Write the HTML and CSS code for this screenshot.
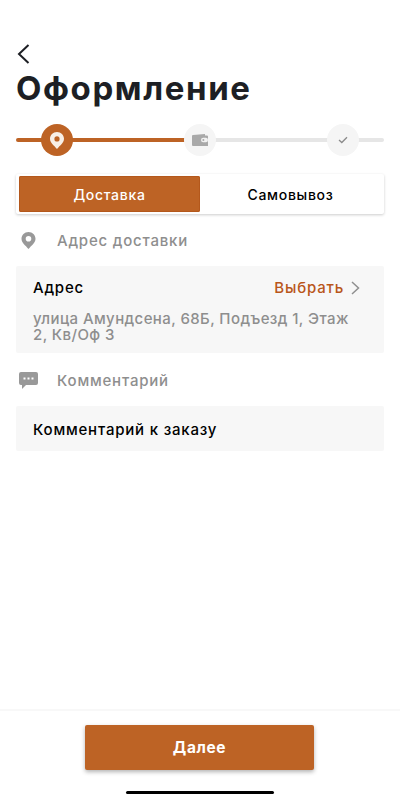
FILE: index.html
```html
<!DOCTYPE html>
<html lang="ru">
<head>
    <meta charset="UTF-8">
    <meta name="viewport" content="width=device-width, initial-scale=1.0">
    <title>Оформление</title>
    <link rel="stylesheet" href="styles.css">
</head>
<body>
    <div class="page">
        <div class="content">
            <button class="back" aria-label="Назад">
                <svg width="13" height="20" viewBox="0 0 13 20"><path d="M11.5 1 L2 10 L11.5 19" fill="none" stroke="#1d1f24" stroke-width="2"/></svg>
            </button>
            <h1 class="title">Оформление</h1>

            <div class="steps">
                <div class="stepLine stepLineDone"></div>
                <div class="stepLine stepLineRest"></div>
                <div class="stepDot stepDotActive">
                    <svg width="14" height="17" viewBox="0 0 14 17"><path fill-rule="evenodd" d="M7 0 C3 0 0 3 0 6.8 C0 10.6 3.8 13.4 7 17 C10.2 13.4 14 10.6 14 6.8 C14 3 11 0 7 0 Z M7 4.3 A2.6 2.6 0 1 1 7 9.5 A2.6 2.6 0 1 1 7 4.3 Z" fill="#f8efe6"/></svg>
                </div>
                <div class="stepDot">
                    <svg width="16" height="12" viewBox="0 0 16 12">
                        <path d="M1 1 L13 0 V1.500 H15 A1 1 0 0 1 16 2.500 V12 H1 A1 1 0 0 1 0 11 V2 A1 1 0 0 1 1 1 Z" fill="#a9a9a9"/>
                        <rect x="9" y="3.800" width="7" height="4.400" rx="2.200" fill="#f1f1f1"/>
                        <circle cx="11.400" cy="6" r="1" fill="#a9a9a9"/>
                    </svg>
                </div>
                <div class="stepDot">
                    <svg width="10" height="8" viewBox="0 0 10 8"><path d="M1 4 L3.800 6.500 L9 1.200" fill="none" stroke="#8a8a8a" stroke-width="1.300"/></svg>
                </div>
            </div>

            <div class="tabs">
                <div class="tab tabActive">Доставка</div>
                <div class="tab">Самовывоз</div>
            </div>

            <div class="sectionHead">
                <span class="sectionIcon">
                    <svg width="15" height="17" viewBox="0 0 14 17"><path fill-rule="evenodd" d="M7 0 C3 0 0 3 0 6.800 C0 10.600 3.800 13.400 7 17 C10.200 13.400 14 10.600 14 6.800 C14 3 11 0 7 0 Z M7 4 A2.800 2.800 0 1 1 7 9.600 A2.800 2.800 0 1 1 7 4 Z" fill="#999"/></svg>
                </span>
                <span>Адрес доставки</span>
            </div>
            <div class="card cardAddress">
                <div class="cardRow">
                    <span>Адрес</span>
                    <span class="pick">Выбрать
                        <svg width="9" height="14" viewBox="0 0 9 14"><path d="M1 1 L7.500 7 L1 13" fill="none" stroke="#8f8f8f" stroke-width="1.500"/></svg>
                    </span>
                </div>
                <div class="addressText">улица Амундсена, 68Б, Подъезд 1, Этаж 2, Кв/Оф 3</div>
            </div>

            <div class="sectionHead sectionHeadLow">
                <span class="sectionIcon">
                    <svg width="19" height="17" viewBox="0 0 19 17"><path fill-rule="evenodd" d="M2 0 H17 A2 2 0 0 1 19 2 V11 A2 2 0 0 1 17 13 H7 L3 17 V13 H2 A2 2 0 0 1 0 11 V2 A2 2 0 0 1 2 0 Z M4.500 5.500 V7.500 H6.500 V5.500 Z M8.500 5.500 V7.500 H10.500 V5.500 Z M12.500 5.500 V7.500 H14.500 V5.500 Z" fill="#999"/></svg>
                </span>
                <span>Комментарий</span>
            </div>
            <div class="card cardComment">Комментарий к заказу</div>
        </div>

        <div class="footer">
            <button class="next">Далее</button>
            <div class="homeBar"></div>
        </div>
    </div>
</body>
</html>
```

FILE: styles.css
```css
* {
    box-sizing: border-box;
}
body {
    margin: 0;
    background: #fff;
    font-family: Inter, "Open Sans", sans-serif;
    color: #000;
}
.page {
    height: 800px;
    display: flex;
    flex-direction: column;
    overflow: hidden;
}
.content {
    padding: 44px 16px 0;
}
.back {
    display: block;
    padding: 0;
    margin: 0 0 0 1px;
    height: 20px;
    background: none;
    border: none;
}
.title {
    margin: 3px 0 0;
    font-size: 33px;
    line-height: 42px;
    font-weight: 700;
    letter-spacing: 1.6px;
    color: #1d1f24;
}

.steps {
    position: relative;
    height: 32px;
    margin-top: 15px;
    display: flex;
    justify-content: space-between;
    padding: 0 25px;
}
.stepLine {
    position: absolute;
    top: 14px;
    height: 4px;
    border-radius: 2px;
}
.stepLineDone {
    left: 0;
    width: 170px;
    background: #bd6325;
}
.stepLineRest {
    left: 168px;
    right: 0;
    background: #e6e6e6;
}
.stepDot {
    position: relative;
    width: 32px;
    height: 32px;
    border-radius: 50%;
    background: #f5f5f5;
    display: flex;
    align-items: center;
    justify-content: center;
}
.stepDotActive {
    background: #bd6325;
}

.tabs {
    display: flex;
    height: 40px;
    margin-top: 18px;
    padding: 2px 3px;
    background: #fff;
    border-radius: 2px;
    box-shadow: 0 1px 3px rgba(0, 0, 0, 0.2);
}
.tab {
    flex: 1;
    display: flex;
    align-items: center;
    justify-content: center;
    font-size: 14px;
    font-weight: 500;
    letter-spacing: 0.7px;
}
.tabActive {
    background: #bd6325;
    color: #fff;
    border-radius: 2px;
    box-shadow: inset 0 0 0 1px #b4581c;
}

.sectionHead {
    display: flex;
    align-items: center;
    height: 52px;
    font-size: 15px;
    font-weight: 500;
    letter-spacing: 0.8px;
    color: #8e8e8e;
}
.sectionHeadLow {
    padding-top: 2px;
}
.sectionIcon {
    display: flex;
    justify-content: center;
    width: 25px;
    margin-right: 16px;
}
.card {
    background: #f7f7f7;
    border-radius: 2px;
    padding: 0 17px;
    font-size: 15px;
    font-weight: 500;
    letter-spacing: 0.8px;
}
.cardAddress {
    height: 87px;
    padding-top: 13px;
}
.cardRow {
    display: flex;
    justify-content: space-between;
    line-height: 18px;
    padding-right: 7px;
}
.pick {
    display: flex;
    align-items: center;
    gap: 7px;
    color: #b9561a;
}
.addressText {
    margin-top: 14px;
    line-height: 16px;
    letter-spacing: 0.4px;
    color: #8e8e8e;
}
.cardComment {
    height: 45px;
    margin-top: 1px;
    padding-top: 2px;
    display: flex;
    align-items: center;
}

.footer {
    margin-top: auto;
    height: 91px;
    border-top: 2px solid #f8f8f8;
    display: flex;
    flex-direction: column;
    align-items: center;
}
.next {
    width: 229px;
    height: 45px;
    margin: 14px 1px 0 0;
    background: #bd6325;
    color: #fff;
    border: none;
    border-radius: 2px;
    font-family: inherit;
    font-size: 15.5px;
    font-weight: 700;
    letter-spacing: 0.6px;
    box-shadow: 0 2px 4px rgba(0, 0, 0, 0.3);
}
.homeBar {
    width: 148px;
    height: 3px;
    margin-top: 21px;
    border-radius: 2px;
    background: #000;
}
```
